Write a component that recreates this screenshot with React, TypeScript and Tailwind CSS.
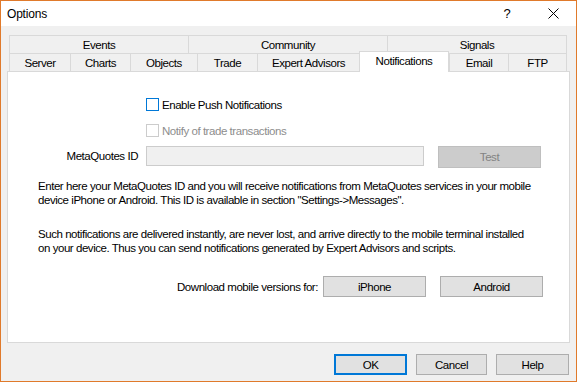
import React from "react";

type Tab = { label: string; w: string; active?: boolean };

const topTabs: Tab[] = [
  { label: "Events", w: "w-[179px]" },
  { label: "Community", w: "w-[199px]" },
  { label: "Signals", w: "w-[180px]" },
];

const bottomTabs: Tab[] = [
  { label: "Server", w: "w-[61px]" },
  { label: "Charts", w: "w-[60px]" },
  { label: "Objects", w: "w-[67px]" },
  { label: "Trade", w: "w-[60px]" },
  { label: "Expert Advisors", w: "w-[102px]" },
  { label: "Notifications", w: "w-[90px]", active: true },
  { label: "Email", w: "w-[59px]" },
  { label: "FTP", w: "w-[59px]" },
];

function TabRow({ tabs }: { tabs: Tab[] }) {
  return (
    <div className="flex items-end h-[18px]">
      {tabs.map((t, i) =>
        t.active ? (
          <div
            key={i}
            className={`${t.w} relative z-10 -mb-px h-[21px] shrink-0 bg-white border border-b-0 border-[#d9d9d9] flex items-start justify-center pt-[2px]`}
          >
            {t.label}
          </div>
        ) : (
          <div
            key={i}
            className={`${t.w} h-[18px] shrink-0 border-t border-l border-[#d9d9d9] flex items-center justify-center ${
              i === tabs.length - 1 ? "border-r" : ""
            }`}
          >
            {t.label}
          </div>
        )
      )}
    </div>
  );
}

function Checkbox({ label, disabled }: { label: string; disabled?: boolean }) {
  return (
    <div className="flex items-center h-[13px] pl-[138px]">
      <span
        className={`w-[13px] h-[13px] border bg-white ${
          disabled ? "border-[#cccccc]" : "border-[#0078d7]"
        }`}
      />
      <span className={`ml-[3px] ${disabled ? "text-[#8d8d8d]" : ""}`}>
        {label}
      </span>
    </div>
  );
}

function WinButton({
  label,
  w,
  primary,
}: {
  label: string;
  w: string;
  primary?: boolean;
}) {
  return (
    <button
      className={`${w} h-[21px] bg-[#e1e1e1] flex items-center justify-center ${
        primary ? "border-2 border-[#0078d7]" : "border border-[#adadad]"
      }`}
    >
      {label}
    </button>
  );
}

export default function App() {
  return (
    <div className="w-[577px] h-[382px] border border-[#e07a2b] bg-[#f0f0f0] flex flex-col font-['Liberation_Sans',Arial,sans-serif] text-[11.5px] tracking-[-0.45px] leading-[14px] text-black">
      {/* title bar */}
      <div className="h-[25px] bg-white flex items-center shrink-0">
        <span className="pl-[6px] text-[12px] tracking-[-0.2px]">Options</span>
        <div className="ml-auto flex h-full">
          <div className="w-[46px] flex items-center justify-center text-[13px]">?</div>
          <div className="w-[46px] flex items-center justify-center">
            <svg width="11" height="11" viewBox="0 0 11 11">
              <path d="M0.5 0.5L10.5 10.5M10.5 0.5L0.5 10.5" stroke="#000" strokeWidth="1" />
            </svg>
          </div>
        </div>
      </div>

      {/* tabs + page */}
      <div className="px-[6px] pt-[9px]">
        <div className="px-[2px]">
          <TabRow tabs={topTabs} />
          <TabRow tabs={bottomTabs} />
        </div>
        <div className="h-[272px] border border-[#d9d9d9] bg-white flex flex-col">
          <div className="mt-[26px]">
            <Checkbox label="Enable Push Notifications" />
          </div>
          <div className="mt-[13px]">
            <Checkbox label="Notify of trade transactions" disabled />
          </div>

          <div className="mt-[9px] flex items-start h-[22px]">
            <span className="w-[130px] text-right leading-[20px]">MetaQuotes ID</span>
            <div className="ml-[8px] w-[278px] h-[20px] bg-[#f0f0f0] border border-[#cccccc]" />
            <button className="ml-[14px] w-[103px] h-[22px] bg-[#cccccc] border border-[#bfbfbf] text-[#838383]">
              Test
            </button>
          </div>

          <p className="mt-[11px] pl-[30px] whitespace-nowrap">
            Enter here your MetaQuotes ID and you will receive notifications from MetaQuotes services in your mobile
            <br />
            device iPhone or Android. This ID is available in section "Settings-&gt;Messages".
          </p>
          <p className="mt-[20px] pl-[30px] whitespace-nowrap">
            Such notifications are delivered instantly, are never lost, and arrive directly to the mobile terminal installed
            <br />
            on your device. Thus you can send notifications generated by Expert Advisors and scripts.
          </p>

          <div className="mt-[21px] flex items-center justify-end pr-[26px]">
            <span className="mr-[5px]">Download mobile versions for:</span>
            <WinButton label="iPhone" w="w-[103px]" />
            <div className="w-[14px]" />
            <WinButton label="Android" w="w-[103px]" />
          </div>
        </div>
      </div>

      {/* dialog buttons */}
      <div className="mt-[11px] flex justify-end gap-[9px] pr-[7px]">
        <WinButton label="OK" w="w-[73px]" primary />
        <WinButton label="Cancel" w="w-[71px]" />
        <WinButton label="Help" w="w-[73px]" />
      </div>
    </div>
  );
}
